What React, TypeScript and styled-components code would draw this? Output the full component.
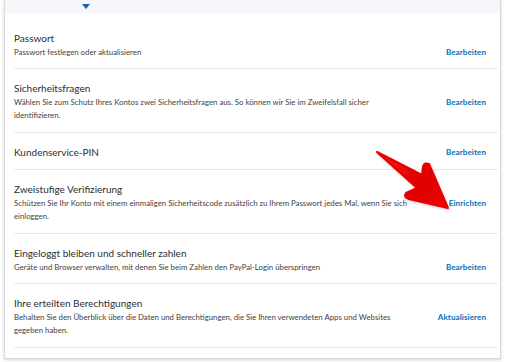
import React from "react";
import styled, { createGlobalStyle } from "styled-components";

const GlobalStyle = createGlobalStyle`
  html, body {
    margin: 0;
    padding: 0;
    background: #ffffff;
  }
  body {
    font-family: Lato, "Open Sans", Arial, sans-serif;
    color: #2c2e2f;
  }
`;

interface SettingItem {
  title: string;
  desc?: string;
  action: string;
}

const items: SettingItem[] = [
  {
    title: "Passwort",
    desc: "Passwort festlegen oder aktualisieren",
    action: "Bearbeiten",
  },
  {
    title: "Sicherheitsfragen",
    desc: "Wählen Sie zum Schutz Ihres Kontos zwei Sicherheitsfragen aus. So können wir Sie im Zweifelsfall sicher identifizieren.",
    action: "Bearbeiten",
  },
  { title: "Kundenservice-PIN", action: "Bearbeiten" },
  {
    title: "Zweistufige Verifizierung",
    desc: "Schützen Sie Ihr Konto mit einem einmaligen Sicherheitscode zusätzlich zu Ihrem Passwort jedes Mal, wenn Sie sich einloggen.",
    action: "Einrichten",
  },
  {
    title: "Eingeloggt bleiben und schneller zahlen",
    desc: "Geräte und Browser verwalten, mit denen Sie beim Zahlen den PayPal-Login überspringen",
    action: "Bearbeiten",
  },
  {
    title: "Ihre erteilten Berechtigungen",
    desc: "Behalten Sie den Überblick über die Daten und Berechtigungen, die Sie Ihren verwendeten Apps und Websites gegeben haben.",
    action: "Aktualisieren",
  },
];

const Page = styled.div`
  position: relative;
  width: 509px;
  height: 362px;
  overflow: hidden;
`;

const Card = styled.div`
  margin: 0 8px 0 4px;
  background: #fff;
  border: 1px solid #d9d9d9;
  border-top: none;
  box-shadow: 0 1px 3px rgba(0, 0, 0, 0.18);
  padding-bottom: 10px;
`;

const TabBand = styled.div`
  height: 13px;
  background: #f4f6fa;
  display: flex;
  align-items: flex-start;
  padding-left: 77px;
  padding-top: 4px;
  box-sizing: border-box;
`;

const Indicator = styled.div`
  width: 0;
  height: 0;
  border-left: 4.5px solid transparent;
  border-right: 4.5px solid transparent;
  border-top: 5px solid #1d5fa7;
`;

const List = styled.div`
  padding-top: 5.5px;
`;

const Row = styled.div`
  margin: 0 2px 0 9px;
  padding: 12px 12px 9.5px 0;
  border-bottom: 1px solid #e9eaec;
  display: grid;
  grid-template-columns: 398px 1fr;
`;

const Title = styled.div`
  grid-column: 1;
  grid-row: 1;
  font-size: 10px;
  line-height: 15px;
  color: #2c2e2f;
`;

const Desc = styled.div`
  grid-column: 1;
  grid-row: 2;
  font-size: 7.8px;
  line-height: 13px;
  color: #3f4143;
`;

const Action = styled.a<{ $row: number }>`
  grid-column: 2;
  grid-row: ${(p) => p.$row};
  justify-self: end;
  align-self: ${(p) => (p.$row === 1 ? "center" : "start")};
  font-size: 8px;
  line-height: 13px;
  font-weight: 700;
  color: #0070ba;
  text-decoration: none;
  letter-spacing: 0.1px;
`;

const ArrowSvg = styled.svg`
  position: absolute;
  left: 372px;
  top: 148px;
  width: 82px;
  height: 66px;
  pointer-events: none;
`;

function RedArrow() {
  return (
    <ArrowSvg viewBox="0 0 82 66">
      <defs>
        <linearGradient id="arrowFill" x1="0" y1="0" x2="1" y2="1">
          <stop offset="0" stopColor="#ff1a1a" />
          <stop offset="0.55" stopColor="#dd0000" />
          <stop offset="1" stopColor="#f20000" />
        </linearGradient>
        <filter id="arrowShadow" x="-20%" y="-20%" width="140%" height="140%">
          <feDropShadow dx="0.5" dy="1" stdDeviation="0.8" floodColor="#000" floodOpacity="0.25" />
        </filter>
      </defs>
      <path
        d="M5 4 L50 27 L51 19 Q52 14 57 16 L76 60 L37 51 Q31 49 34 45 L45 40 Z"
        fill="url(#arrowFill)"
        stroke="#e60000"
        strokeWidth="2"
        strokeLinejoin="round"
        filter="url(#arrowShadow)"
      />
    </ArrowSvg>
  );
}

export default function App() {
  return (
    <Page>
      <GlobalStyle />
      <Card>
        <TabBand>
          <Indicator />
        </TabBand>
        <List>
          {items.map((item) => (
            <Row key={item.title}>
              <Title>{item.title}</Title>
              {item.desc && <Desc>{item.desc}</Desc>}
              <Action href="#" $row={item.desc ? 2 : 1}>
                {item.action}
              </Action>
            </Row>
          ))}
        </List>
      </Card>
      <RedArrow />
    </Page>
  );
}
